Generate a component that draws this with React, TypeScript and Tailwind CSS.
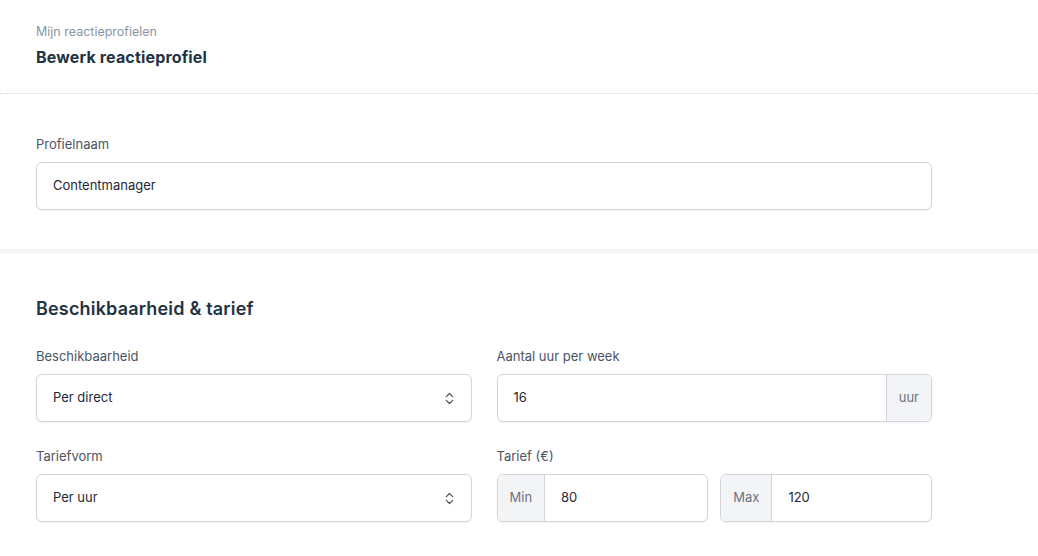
import { ChevronsUpDown } from "lucide-react";

const labelCls = "block text-[13px] leading-5 text-[#4b5563] mb-2";
const boxCls =
  "h-12 w-full rounded-md border border-[#d1d5db] bg-white shadow-[0_1px_2px_rgba(15,23,42,0.05)] flex items-stretch overflow-hidden";

function TextBox({ value }: { value: string }) {
  return (
    <div className={boxCls}>
      <div className="flex-1 flex items-center px-4 text-[13px] text-[#1f2937]">{value}</div>
    </div>
  );
}

function SelectBox({ value }: { value: string }) {
  return (
    <div className={boxCls}>
      <div className="flex-1 flex items-center px-4 text-[13px] text-[#1f2937]">{value}</div>
      <div className="flex items-center pr-[14px] text-[#4b5563]">
        <ChevronsUpDown size={15} strokeWidth={2} />
      </div>
    </div>
  );
}

function AddonBox({ addon, value, side }: { addon: string; value: string; side: "left" | "right" }) {
  const tag = (
    <div
      className={`flex items-center px-3 bg-[#f3f4f6] text-[13px] text-[#6b7280] ${
        side === "left" ? "border-r" : "border-l"
      } border-[#d1d5db]`}
    >
      {addon}
    </div>
  );
  return (
    <div className={boxCls}>
      {side === "left" && tag}
      <div className="flex-1 flex items-center px-4 text-[13px] text-[#1f2937]">{value}</div>
      {side === "right" && tag}
    </div>
  );
}

export default function App() {
  return (
    <div className="min-h-[556px] bg-white font-['Inter',sans-serif] antialiased">
      <header className="h-[94px] px-9 pt-[23px] border-b border-dotted border-[#d1d5db]">
        <div className="text-[12.5px] leading-[18px] text-[#8a96a3]">Mijn reactieprofielen</div>
        <h1 className="mt-[4px] text-base leading-6 font-bold text-[#1f3344] tracking-[0.01em]">
          Bewerk reactieprofiel
        </h1>
      </header>

      <section className="px-9 pt-10 pb-[39px] border-b-4 border-[#f3f4f6]">
        <div className="w-[896px]">
          <label className={labelCls}>Profielnaam</label>
          <TextBox value="Contentmanager" />
        </div>
      </section>

      <section className="px-9 pt-[42px]">
        <h2 className="text-lg leading-7 font-semibold text-[#1f3344] tracking-[0.01em]">
          Beschikbaarheid &amp; tarief
        </h2>
        <div className="mt-[23px] w-[896px] grid grid-cols-2 gap-x-[25px] gap-y-6">
          <div>
            <label className={labelCls}>Beschikbaarheid</label>
            <SelectBox value="Per direct" />
          </div>
          <div>
            <label className={labelCls}>Aantal uur per week</label>
            <AddonBox addon="uur" value="16" side="right" />
          </div>
          <div>
            <label className={labelCls}>Tariefvorm</label>
            <SelectBox value="Per uur" />
          </div>
          <div>
            <label className={labelCls}>Tarief (€)</label>
            <div className="grid grid-cols-2 gap-3">
              <AddonBox addon="Min" value="80" side="left" />
              <AddonBox addon="Max" value="120" side="left" />
            </div>
          </div>
        </div>
      </section>
    </div>
  );
}
